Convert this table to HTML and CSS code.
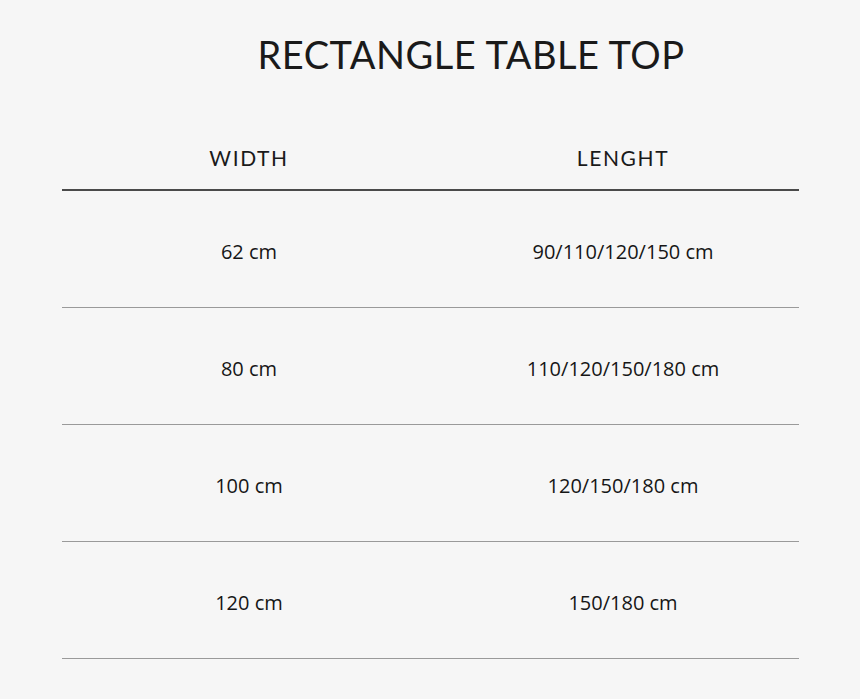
FILE: index.html
```html
<!DOCTYPE html>
<html>
<head>
<meta charset="utf-8">
<link rel="stylesheet" href="styles.css">
</head>
<body>
<div class="page">
  <h1 class="title">RECTANGLE TABLE TOP</h1>
  <div class="table">
    <div class="row head">
      <div class="cell">WIDTH</div>
      <div class="cell right">LENGHT</div>
    </div>
    <div class="row">
      <div class="cell">62 cm</div>
      <div class="cell right">90/110/120/150 cm</div>
    </div>
    <div class="row">
      <div class="cell">80 cm</div>
      <div class="cell right">110/120/150/180 cm</div>
    </div>
    <div class="row">
      <div class="cell">100 cm</div>
      <div class="cell right">120/150/180 cm</div>
    </div>
    <div class="row">
      <div class="cell">120 cm</div>
      <div class="cell right">150/180 cm</div>
    </div>
  </div>
</div>
</body>
</html>
```
FILE: styles.css
```css
html, body {
  margin: 0;
  padding: 0;
  background: #f6f6f6;
}
.page {
  width: 737px;
  margin-left: 62px;
  padding-top: 35px;
}
.title {
  margin: 0;
  padding-left: 81px;
  text-align: center;
  font-family: "Lato", "Liberation Sans", sans-serif;
  font-weight: 400;
  font-size: 38px;
  line-height: 38px;
  letter-spacing: 0.5px;
  color: #1a1a1a;
}
.table {
  margin-top: 74px;
}
.row {
  display: grid;
  grid-template-columns: 374px 363px;
  border-bottom: 1px solid #9a9a9a;
  font-family: "Open Sans", "Liberation Sans", sans-serif;
  font-size: 20px;
  line-height: 20px;
  color: #161616;
  text-align: center;
}
.row .cell {
  padding: 51px 0 45px;
}
.row .right {
  padding-left: 11px;
}
.row.head {
  border-bottom: 2px solid #4a4a4a;
  font-family: "Lato", "Liberation Sans", sans-serif;
  font-size: 21px;
  line-height: 21px;
  letter-spacing: 1.6px;
  color: #1a1a1a;
}
.row.head .cell {
  padding: 0 0 21px;
}
.row.head .right {
  padding-left: 11px;
}
```
